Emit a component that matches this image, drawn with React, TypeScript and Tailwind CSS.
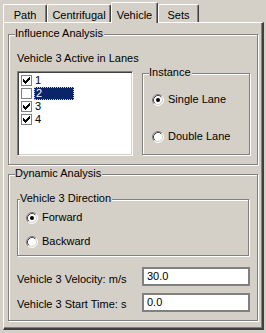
import React from "react";

const BG = "#d4d0c8";

function Radio({ checked }: { checked?: boolean }) {
  return (
    <svg width="12" height="12" viewBox="0 0 12 12" className="shrink-0">
      <circle cx="6" cy="6" r="5" fill="#ffffff" />
      <path d="M2.11 9.89 A5.5 5.5 0 0 1 9.89 2.11" fill="none" stroke="#808080" strokeWidth="1" />
      <path d="M9.89 2.11 A5.5 5.5 0 0 1 2.11 9.89" fill="none" stroke="#ffffff" strokeWidth="1" />
      <path d="M2.82 9.18 A4.5 4.5 0 0 1 9.18 2.82" fill="none" stroke="#404040" strokeWidth="1" />
      <path d="M9.18 2.82 A4.5 4.5 0 0 1 2.82 9.18" fill="none" stroke={BG} strokeWidth="1" />
      {checked && <circle cx="6" cy="6" r="2" fill="#000000" />}
    </svg>
  );
}

const CHECK = [
  "......X",
  ".....XX",
  "X...XXX",
  "XX.XXX.",
  "XXXXX..",
  ".XXX...",
  "..X....",
];

function CheckBox({ checked }: { checked?: boolean }) {
  return (
    <svg width="11" height="11" viewBox="0 0 11 11" className="shrink-0" shapeRendering="crispEdges">
      <rect x="0.5" y="0.5" width="10" height="10" fill="#ffffff" stroke="#808080" />
      {checked &&
        CHECK.flatMap((row, y) =>
          row.split("").map((c, x) =>
            c === "X" ? <rect key={`${x}-${y}`} x={x + 2} y={y + 2} width="1" height="1" fill="#000" /> : null
          )
        )}
    </svg>
  );
}

function Tab({ label, selected, w }: { label: string; selected?: boolean; w: string }) {
  if (selected) {
    return (
      <div
        className={`${w} h-[21px] -mb-px relative z-10 bg-[#d4d0c8] border-t border-l border-white border-r border-r-[#404040] shadow-[inset_-1px_0_0_#808080] rounded-t-[2px] flex justify-center pt-[6px] leading-[13px]`}
      >
        {label}
      </div>
    );
  }
  return (
    <div
      className={`${w} h-[18px] bg-[#d4d0c8] border-t border-l border-white border-r border-r-[#404040] shadow-[inset_-1px_0_0_#808080] rounded-t-[2px] flex justify-center pt-[4px] leading-[13px]`}
    >
      {label}
    </div>
  );
}

function GroupTitle({ children, left }: { children: React.ReactNode; left: string }) {
  return (
    <span className={`absolute ${left} top-[-8px] bg-[#d4d0c8] leading-[13px] pr-[1px]`}>{children}</span>
  );
}

const groupCls =
  "relative border border-[#808080] shadow-[inset_1px_1px_0_#ffffff,1px_1px_0_#ffffff]";

export default function App() {
  const items = [
    { n: "1", c: true },
    { n: "2", c: false, sel: true },
    { n: "3", c: true },
    { n: "4", c: true },
  ];
  return (
    <div
      className="w-[266px] h-[333px] bg-[#d4d0c8] text-black text-[11px] overflow-hidden"
      style={{ fontFamily: '"Liberation Sans", Arial, sans-serif' }}
    >
      <div className="flex items-end h-[22px] pl-[3px]">
        <Tab label="Path" w="w-[44px]" />
        <Tab label="Centrifugal" w="w-[64px]" />
        <Tab label="Vehicle" w="w-[47px]" selected />
        <Tab label="Sets" w="w-[41px]" />
      </div>
      <div className="ml-[3px] w-[261px] h-[308px] border-t border-l border-white border-r-2 border-b-2 border-r-[#404040] border-b-[#404040] shadow-[inset_-1px_-1px_0_#808080] pl-[4px] pt-[11px]">
        {/* Influence Analysis */}
        <div className={`${groupCls} w-[250px] h-[131px]`}>
          <GroupTitle left="left-[6px]">Influence Analysis</GroupTitle>
          <div className="flex pl-[8px]">
            <div className="flex flex-col w-[116px] shrink-0">
              <div className="mt-[17px] leading-[13px] h-[13px] whitespace-nowrap">Vehicle 3 Active in Lanes</div>
              <div className="mt-[6px] w-[116px] h-[85px] bg-white border-t border-l border-[#808080] border-r border-b border-r-white border-b-white shadow-[inset_1px_1px_0_#404040,inset_-1px_-1px_0_#d4d0c8] pt-[2px] pl-[3px]">
                {items.map((it) => (
                  <div key={it.n} className="flex items-center h-[13px]">
                    <CheckBox checked={it.c} />
                    {it.sel ? (
                      <span className="ml-[2px] w-[40px] h-[13px] bg-[#0a246a] text-white leading-[11px] pl-[1px] border border-dotted border-[#f0d080]">
                        {it.n}
                      </span>
                    ) : (
                      <span className="ml-[3px] leading-[13px]">{it.n}</span>
                    )}
                  </div>
                ))}
              </div>
            </div>
            <div className={`${groupCls} ml-[9px] mt-[38px] w-[108px] h-[82px]`}>
              <GroupTitle left="left-[6px]">Instance</GroupTitle>
              <div className="flex items-center mt-[19px] pl-[9px]">
                <Radio checked />
                <span className="ml-[4px] leading-[13px]">Single Lane</span>
              </div>
              <div className="flex items-center mt-[24px] pl-[9px]">
                <Radio />
                <span className="ml-[4px] leading-[13px]">Double Lane</span>
              </div>
            </div>
          </div>
        </div>

        {/* Dynamic Analysis */}
        <div className={`${groupCls} mt-[9px] w-[250px] h-[147px]`}>
          <GroupTitle left="left-[6px]">Dynamic Analysis</GroupTitle>
          <div className="pl-[8px]">
            <div className={`${groupCls} mt-[24px] w-[232px] h-[57px]`}>
              <GroupTitle left="left-[2px]">Vehicle 3 Direction</GroupTitle>
              <div className="flex items-center mt-[11px] pl-[8px]">
                <Radio checked />
                <span className="ml-[4px] leading-[13px]">Forward</span>
              </div>
              <div className="flex items-center mt-[11px] pl-[8px]">
                <Radio />
                <span className="ml-[4px] leading-[13px]">Backward</span>
              </div>
            </div>
            <div className="flex items-center mt-[11px] h-[19px]">
              <span className="w-[125px] leading-[13px] pt-[6px]">Vehicle 3 Velocity: m/s</span>
              <div className="w-[108px] h-[19px] bg-white border-2 border-[#808080] pl-[3px] leading-[15px]">30.0</div>
            </div>
            <div className="flex items-center mt-[7px] h-[19px]">
              <span className="w-[125px] leading-[13px] pt-[4px]">Vehicle 3 Start Time: s</span>
              <div className="w-[108px] h-[19px] bg-white border-2 border-[#808080] pl-[3px] leading-[15px]">0.0</div>
            </div>
          </div>
        </div>
      </div>
    </div>
  );
}
